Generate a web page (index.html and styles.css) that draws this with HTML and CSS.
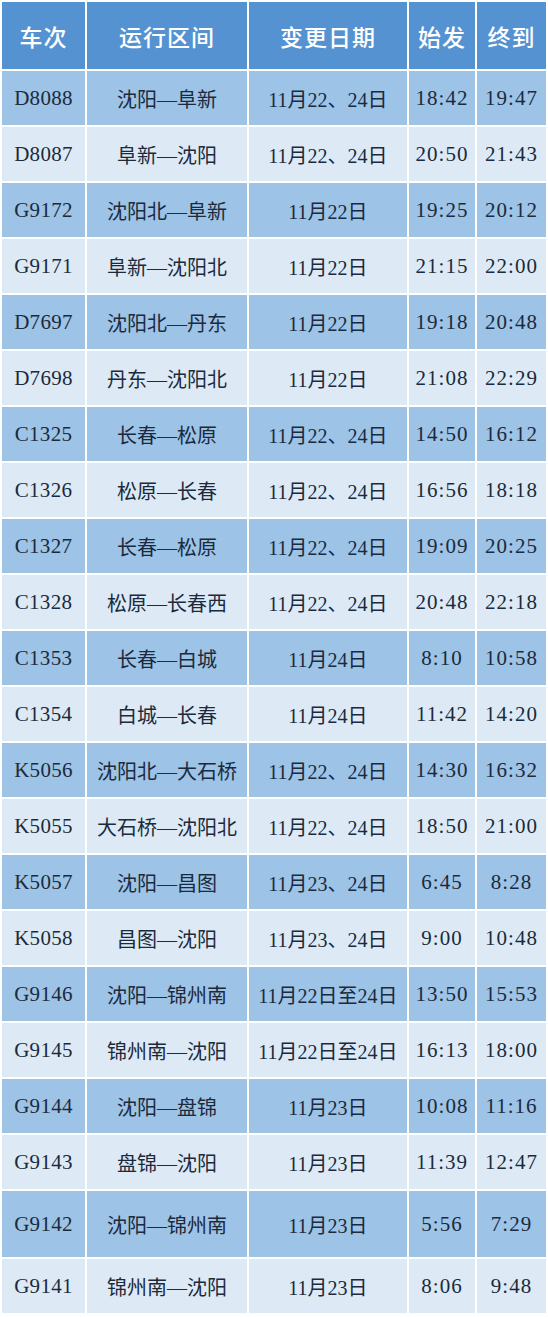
FILE: index.html
```html
<!DOCTYPE html>
<html lang="zh-CN">
<head>
<meta charset="utf-8">
<title>列车变更</title>
<link rel="stylesheet" href="styles.css">
</head>
<body>
<table class="sched">
  <colgroup>
    <col class="c1"><col class="c2"><col class="c3"><col class="c4"><col class="c5">
  </colgroup>
  <thead>
    <tr class="head"><th>车次</th><th>运行区间</th><th>变更日期</th><th>始发</th><th>终到</th></tr>
  </thead>
  <tbody>
    <tr class="dark"><td>D8088</td><td>沈阳—阜新</td><td>11月22、24日</td><td>18:42</td><td>19:47</td></tr>
    <tr class="light"><td>D8087</td><td>阜新—沈阳</td><td>11月22、24日</td><td>20:50</td><td>21:43</td></tr>
    <tr class="dark"><td>G9172</td><td>沈阳北—阜新</td><td>11月22日</td><td>19:25</td><td>20:12</td></tr>
    <tr class="light"><td>G9171</td><td>阜新—沈阳北</td><td>11月22日</td><td>21:15</td><td>22:00</td></tr>
    <tr class="dark"><td>D7697</td><td>沈阳北—丹东</td><td>11月22日</td><td>19:18</td><td>20:48</td></tr>
    <tr class="light"><td>D7698</td><td>丹东—沈阳北</td><td>11月22日</td><td>21:08</td><td>22:29</td></tr>
    <tr class="dark"><td>C1325</td><td>长春—松原</td><td>11月22、24日</td><td>14:50</td><td>16:12</td></tr>
    <tr class="light"><td>C1326</td><td>松原—长春</td><td>11月22、24日</td><td>16:56</td><td>18:18</td></tr>
    <tr class="dark"><td>C1327</td><td>长春—松原</td><td>11月22、24日</td><td>19:09</td><td>20:25</td></tr>
    <tr class="light"><td>C1328</td><td>松原—长春西</td><td>11月22、24日</td><td>20:48</td><td>22:18</td></tr>
    <tr class="dark"><td>C1353</td><td>长春—白城</td><td>11月24日</td><td>8:10</td><td>10:58</td></tr>
    <tr class="light"><td>C1354</td><td>白城—长春</td><td>11月24日</td><td>11:42</td><td>14:20</td></tr>
    <tr class="dark"><td>K5056</td><td>沈阳北—大石桥</td><td>11月22、24日</td><td>14:30</td><td>16:32</td></tr>
    <tr class="light"><td>K5055</td><td>大石桥—沈阳北</td><td>11月22、24日</td><td>18:50</td><td>21:00</td></tr>
    <tr class="dark"><td>K5057</td><td>沈阳—昌图</td><td>11月23、24日</td><td>6:45</td><td>8:28</td></tr>
    <tr class="light"><td>K5058</td><td>昌图—沈阳</td><td>11月23、24日</td><td>9:00</td><td>10:48</td></tr>
    <tr class="dark"><td>G9146</td><td>沈阳—锦州南</td><td>11月22日至24日</td><td>13:50</td><td>15:53</td></tr>
    <tr class="light"><td>G9145</td><td>锦州南—沈阳</td><td>11月22日至24日</td><td>16:13</td><td>18:00</td></tr>
    <tr class="dark"><td>G9144</td><td>沈阳—盘锦</td><td>11月23日</td><td>10:08</td><td>11:16</td></tr>
    <tr class="light"><td>G9143</td><td>盘锦—沈阳</td><td>11月23日</td><td>11:39</td><td>12:47</td></tr>
    <tr class="dark tall"><td>G9142</td><td>沈阳—锦州南</td><td>11月23日</td><td>5:56</td><td>7:29</td></tr>
    <tr class="light"><td>G9141</td><td>锦州南—沈阳</td><td>11月23日</td><td>8:06</td><td>9:48</td></tr>
  </tbody>
</table>
</body>
</html>
```
FILE: styles.css
```css
html, body {
  margin: 0;
  padding: 0;
  background: #ffffff;
}

.sched {
  width: 548px;
  table-layout: fixed;
  border-collapse: separate;
  border-spacing: 2px;
  font-family: "Liberation Serif", "Noto Sans CJK SC", serif;
  color: #1b2a3c;
}

.c1 { width: 83px; }
.c2 { width: 160px; }
.c3 { width: 158px; }
.c4 { width: 66px; }
.c5 { width: 69px; }

.sched th,
.sched td {
  padding: 0;
  text-align: center;
  vertical-align: middle;
  white-space: nowrap;
}

.head th {
  height: 67px;
  background: #5592d2;
  color: #ffffff;
  font-family: "Noto Sans CJK SC", sans-serif;
  font-weight: 500;
  font-size: 23px;
  letter-spacing: 1px;
}

.sched td {
  height: 54px;
  font-size: 20px;
}

.sched td:first-child {
  font-size: 21px;
  letter-spacing: 0.3px;
}

.sched td:nth-child(4),
.sched td:nth-child(5) {
  font-size: 21px;
  letter-spacing: 1px;
}

.sched tr.tall td {
  height: 66px;
}

.dark td {
  background: #9dc3e6;
}

.light td {
  background: #ddeaf6;
}
```
